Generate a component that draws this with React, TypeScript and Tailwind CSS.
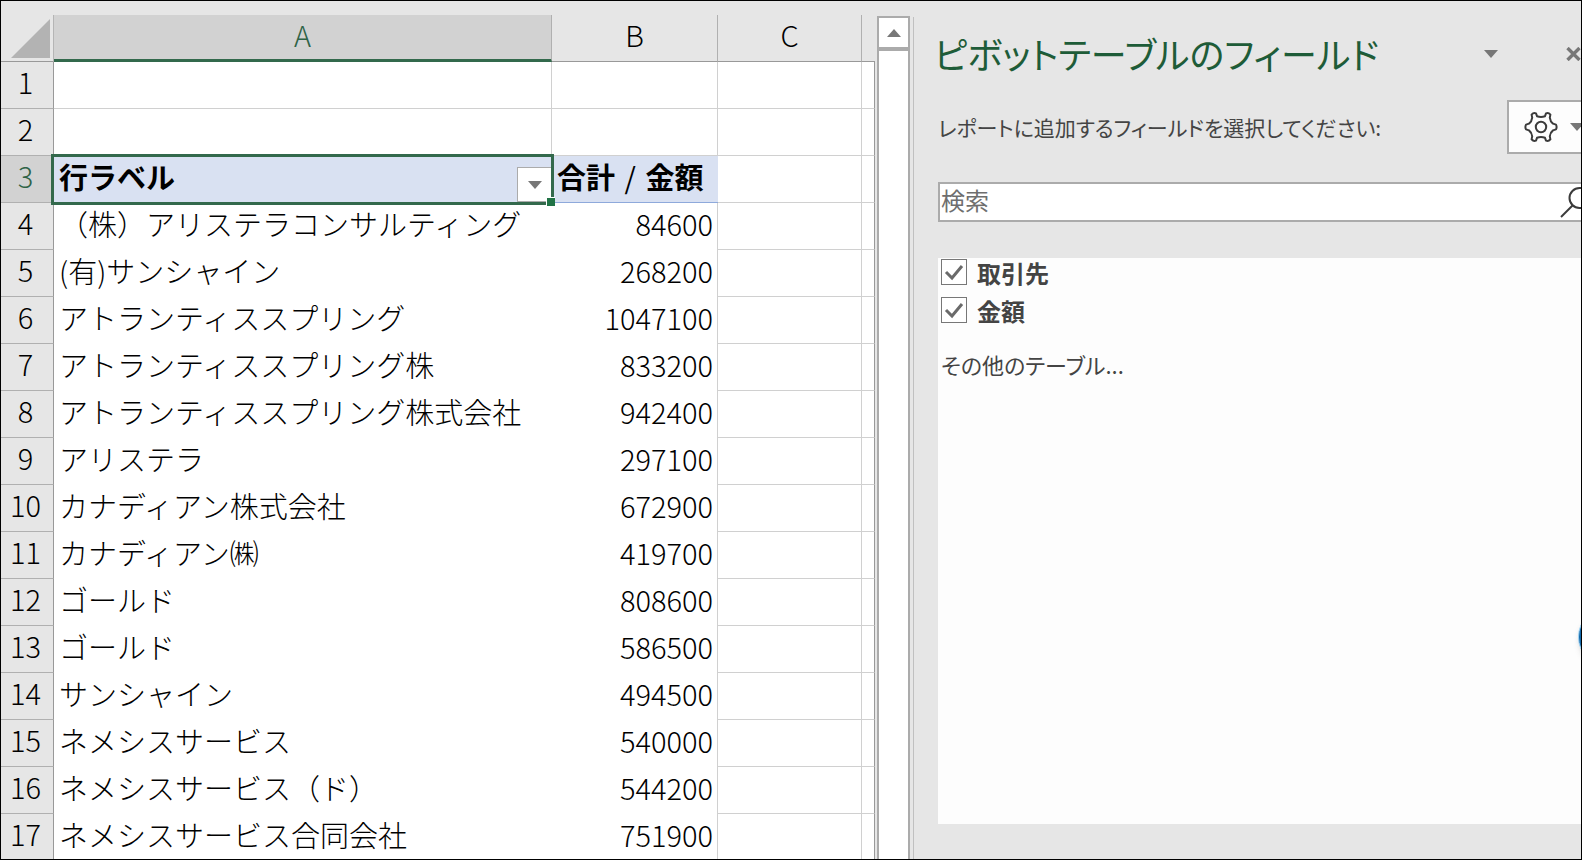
import { useState } from "react";

const rows = [
  { label: "（株）アリステラコンサルティング", amount: 84600 },
  { label: "(有)サンシャイン", amount: 268200 },
  { label: "アトランティススプリング", amount: 1047100 },
  { label: "アトランティススプリング株", amount: 833200 },
  { label: "アトランティススプリング株式会社", amount: 942400 },
  { label: "アリステラ", amount: 297100 },
  { label: "カナディアン株式会社", amount: 672900 },
  { label: "カナディアン㈱", amount: 419700 },
  { label: "ゴールド", amount: 808600 },
  { label: "ゴールド", amount: 586500 },
  { label: "サンシャイン", amount: 494500 },
  { label: "ネメシスサービス", amount: 540000 },
  { label: "ネメシスサービス（ド）", amount: 544200 },
  { label: "ネメシスサービス合同会社", amount: 751900 },
];

const rowHead =
  "border-r border-b border-r-[#999999] border-b-[#b0b0b0] p-0 pr-[3px] pb-[8px] text-center font-light";
const gridCell = "border-r border-b border-[#d0d0d0] p-0";

function Caret({ up = false }: { up?: boolean }) {
  return (
    <svg width="14" height="8" viewBox="0 0 14 8" aria-hidden="true">
      <path d={up ? "M0 8L7 0l7 8z" : "M0 0h14L7 8z"} fill="#777777" />
    </svg>
  );
}

function GearIcon() {
  return (
    <svg width="34" height="34" viewBox="-17 -17 34 34" fill="none" stroke="#3b3b3b" strokeWidth="2" strokeLinejoin="round" aria-hidden="true">
      <circle r="5.2" />
      <path d="M-4 -10.8Q0 -9.4 4 -10.8L5 -13.6Q7.5 -14.6 9.4 -12.4L8.8 -9.4Q9.2 -5.6 12 -3.4L15 -2.4Q16.2 0 15 2.4L12 3.4Q9.2 5.6 8.8 9.4L9.4 12.4Q7.5 14.6 5 13.6L4 10.8Q0 9.4 -4 10.8L-5 13.6Q-7.5 14.6 -9.4 12.4L-8.8 9.4Q-9.2 5.6 -12 3.4L-15 2.4Q-16.2 0 -15 -2.4L-12 -3.4Q-9.2 -5.6 -8.8 -9.4L-9.4 -12.4Q-7.5 -14.6 -5 -13.6Z" />
    </svg>
  );
}

function Sheet() {
  return (
    <table className="w-[874px] table-fixed border-separate border-spacing-0 text-[29px] leading-[36px] whitespace-nowrap text-black">
      <colgroup>
        <col className="w-[53px]" />
        <col className="w-[498px]" />
        <col className="w-[166px]" />
        <col className="w-[144px]" />
        <col className="w-[13px]" />
      </colgroup>
      <thead>
        <tr className="h-[47px]">
          <td className="border-r border-b border-r-[#b5b5b5] border-b-[#999999] p-0">
            <svg className="ml-auto mr-[3px]" width="39" height="39" viewBox="0 0 39 39" aria-hidden="true">
              <path d="M39 0v39H0z" fill="#b3b3b3" />
            </svg>
          </td>
          <th scope="col" className="border-r border-b-[3px] border-r-[#b0b0b0] border-b-[#33694c] bg-[#d2d2d2] p-0 pb-[6px] font-light text-[#2f6347]">
            A
          </th>
          <th scope="col" className="border-r border-b border-r-[#b0b0b0] border-b-[#999999] p-0 pb-[8px] font-light">B</th>
          <th scope="col" className="border-r border-b border-r-[#b0b0b0] border-b-[#999999] p-0 pb-[8px] font-light">C</th>
          <td className="border-b border-b-[#999999] p-0" />
        </tr>
      </thead>
      <tbody>
        {[1, 2].map((n) => (
          <tr key={n} className="h-[47px]">
            <th scope="row" className={rowHead}>{n}</th>
            <td className={`${gridCell} bg-white`} />
            <td className={`${gridCell} bg-white`} />
            <td className={`${gridCell} bg-white`} />
            <td className="border-r border-b border-r-[#999999] border-b-[#d0d0d0] bg-white p-0" />
          </tr>
        ))}
        <tr className="h-[47px]">
          <th scope="row" className={`${rowHead} bg-[#d2d2d2] text-[#2f6347]`}>3</th>
          <td className="relative bg-[#d9e1f2] p-0 pb-[8px] pl-[5px] font-bold">
            行ラベル
            {/* active cell frame and fill handle */}
            <div className="pointer-events-none absolute -top-[2px] -right-[2px] -bottom-[2px] -left-[3px] border-[3px] border-[#33694c]" />
            <button
              type="button"
              aria-label="フィルター"
              className="absolute right-[1px] bottom-[1px] flex h-[35px] w-[34px] items-center justify-center border border-r-0 border-[#ababab] bg-white"
            >
              <Caret />
            </button>
            <div className="absolute -right-[3px] -bottom-[3px] size-[9px] border-t border-l border-white bg-[#217346]" />
          </td>
          <td className="border-b border-[#8ea9db] bg-[#d9e1f2] p-0 pb-[7px] pl-[5px] font-bold">
            合計 <span className="mx-[3px] font-normal">/</span> 金額
          </td>
          <td className={`${gridCell} bg-white`} />
          <td className="border-r border-b border-r-[#999999] border-b-[#d0d0d0] bg-white p-0" />
        </tr>
        {rows.map((row, i) => (
          <tr key={i} className="h-[47px]">
            <th scope="row" className={rowHead}>{i + 4}</th>
            <td className="bg-white p-0 pb-[8px] pl-[5px] font-light">{row.label}</td>
            <td className="border-r border-[#d0d0d0] bg-white p-0 pr-[4px] pb-[8px] text-right font-light">{row.amount}</td>
            <td className={`${gridCell} bg-white`} />
            <td className="border-r border-b border-r-[#999999] border-b-[#d0d0d0] bg-white p-0" />
          </tr>
        ))}
      </tbody>
    </table>
  );
}

function FieldCheckbox({ label }: { label: string }) {
  const [checked, setChecked] = useState(true);
  return (
    <label className="flex h-[38px] items-start gap-[10px] text-[24px] leading-[28px] font-bold">
      <span className="grid">
        <input
          type="checkbox"
          checked={checked}
          onChange={() => setChecked(!checked)}
          className="col-start-1 row-start-1 size-[26px] appearance-none border border-[#777777] bg-white"
        />
        {checked && (
          <svg className="pointer-events-none col-start-1 row-start-1" width="26" height="26" viewBox="0 0 26 26" fill="none" stroke="#6a6a6a" strokeWidth="3" aria-hidden="true">
            <path d="M5 13l6 6L21 7" />
          </svg>
        )}
      </span>
      {label}
    </label>
  );
}

function FieldPane() {
  return (
    <aside className="relative flex min-w-0 flex-1 flex-col overflow-hidden pl-[24px] text-[#444444]">
      <header className="flex h-[99px] shrink-0 items-start pt-[28px]">
        <h1 className="-ml-1 text-[36px] leading-[48px] whitespace-nowrap text-[#1e5c38] [font-feature-settings:'palt']">
          ピボットテーブルのフィールド
        </h1>
        <div className="ml-auto flex h-[50px] items-center gap-[68px]">
          <button type="button" aria-label="ウィンドウ オプション"><Caret /></button>
          <button type="button" aria-label="閉じる">
            <svg width="15" height="14" viewBox="0 0 15 14" stroke="#777777" strokeWidth="3.4" aria-hidden="true">
              <path d="M1.5 1l12 12M13.5 1l-12 12" />
            </svg>
          </button>
        </div>
      </header>

      <div className="flex h-[54px] shrink-0 items-center">
        <p className="text-[21px] leading-[32px] whitespace-nowrap [font-feature-settings:'palt']">
          レポートに追加するフィールドを選択してください:
        </p>
        <button
          type="button"
          aria-label="ツール"
          className="ml-auto flex h-[54px] w-[74px] shrink-0 items-center gap-[12px] overflow-hidden border-2 border-r-0 border-[#ababab] bg-[#fdfdfd] pl-[15px]"
        >
          <span className="shrink-0"><GearIcon /></span>
          <span className="shrink-0"><Caret /></span>
        </button>
      </div>

      <div className="mt-[28px] flex h-[40px] shrink-0 items-center overflow-hidden border-2 border-r-0 border-[#ababab] bg-white">
        <input
          type="search"
          aria-label="検索"
          placeholder="検索"
          className="h-[36px] min-w-0 flex-1 pb-[4px] pl-[1px] text-[24px] outline-none placeholder:text-[#6e6e6e]"
        />
        <svg className="shrink-0" width="21" height="34" viewBox="0 0 21 34" fill="none" stroke="#3b3b3b" strokeWidth="2" aria-hidden="true">
          <circle cx="19.5" cy="13" r="10" />
          <path d="M12.5 20.5L1 32" />
        </svg>
      </div>

      <div className="mt-[36px] mb-[35px] flex-1 bg-[#fdfdfd] pt-[1px] pl-[3px]">
        <FieldCheckbox label="取引先" />
        <FieldCheckbox label="金額" />
        <a href="#" className="mt-[11px] block text-[22px] leading-[36px] [font-feature-settings:'palt']">
          その他のテーブル...
        </a>
      </div>

      {/* floating badge, mostly past the right edge */}
      <div className="absolute top-[606px] -right-[57px] size-[60px] rounded-full border border-[#9fd4f5] bg-[#1267a8] shadow-md" />
    </aside>
  );
}

export default function App() {
  return (
    <main
      lang="ja"
      className="flex h-screen overflow-hidden border border-black bg-[#e6e6e6] font-['Noto_Sans_CJK_JP',sans-serif]"
    >
      <section className="shrink-0 pt-[14px]">
        <Sheet />
      </section>
      <div className="ml-[2px] flex w-[33px] shrink-0 flex-col pt-[15px]">
        <button
          type="button"
          aria-label="上へスクロール"
          className="flex h-[33px] shrink-0 items-center justify-center border-2 border-[#ababab] bg-white"
        >
          <Caret up />
        </button>
        <div className="flex-1 border-2 border-b-0 border-[#ababab] bg-white" />
      </div>
      <div className="mt-[16px] ml-[3px] w-px shrink-0 bg-[#c0c0c0]" />
      <FieldPane />
    </main>
  );
}
